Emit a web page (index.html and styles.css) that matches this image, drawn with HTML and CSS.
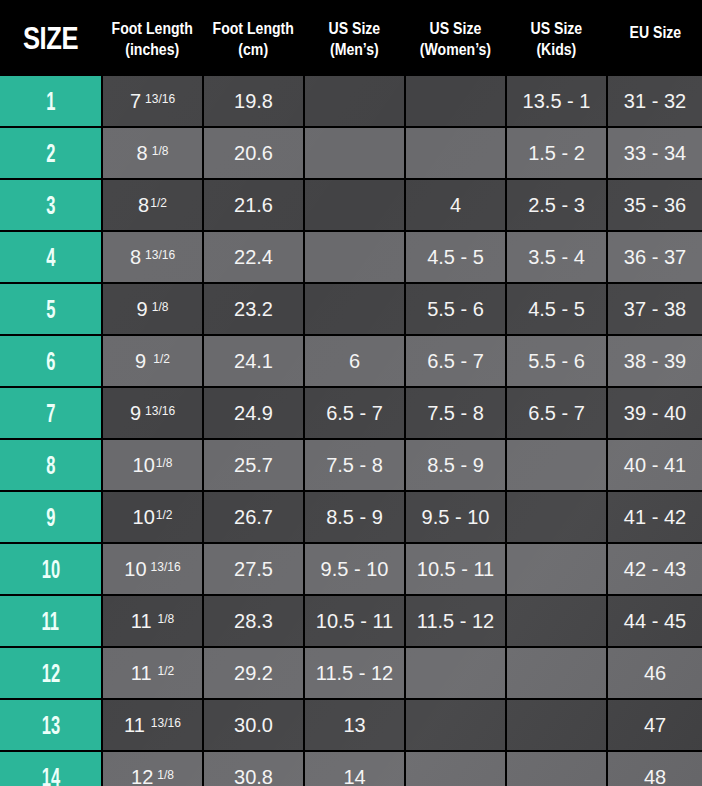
FILE: index.html
```html
<!DOCTYPE html>
<html lang="en">
<head>
<meta charset="utf-8">
<title>Size Chart</title>
<link rel="stylesheet" href="styles.css">
</head>
<body>
<div class="chart">
  <div class="row head">
    <div class="hc size"><span class="cond-xl">SIZE</span></div>
    <div class="hc"><span class="cond">Foot Length<br>(inches)</span></div>
    <div class="hc"><span class="cond">Foot Length<br>(cm)</span></div>
    <div class="hc"><span class="cond">US Size<br>(Men’s)</span></div>
    <div class="hc"><span class="cond">US Size<br>(Women’s)</span></div>
    <div class="hc"><span class="cond">US Size<br>(Kids)</span></div>
    <div class="hc single"><span class="cond">EU Size</span></div>
  </div>

  <div class="row dark">
    <div class="num"><span class="cond-num">1</span></div>
    <div class="c"><span>7</span><span class="fr">13/16</span></div><div class="c">19.8</div><div class="c"></div><div class="c"></div><div class="c">13.5 - 1</div><div class="c">31 - 32</div>
  </div>
  <div class="row light">
    <div class="num"><span class="cond-num">2</span></div>
    <div class="c"><span>8</span><span class="fr">1/8</span></div><div class="c">20.6</div><div class="c"></div><div class="c"></div><div class="c">1.5 - 2</div><div class="c">33 - 34</div>
  </div>
  <div class="row dark">
    <div class="num"><span class="cond-num">3</span></div>
    <div class="c"><span>8</span><span class="fr tight">1/2</span></div><div class="c">21.6</div><div class="c"></div><div class="c">4</div><div class="c">2.5 - 3</div><div class="c">35 - 36</div>
  </div>
  <div class="row light">
    <div class="num"><span class="cond-num">4</span></div>
    <div class="c"><span>8</span><span class="fr">13/16</span></div><div class="c">22.4</div><div class="c"></div><div class="c">4.5 - 5</div><div class="c">3.5 - 4</div><div class="c">36 - 37</div>
  </div>
  <div class="row dark">
    <div class="num"><span class="cond-num">5</span></div>
    <div class="c"><span>9</span><span class="fr">1/8</span></div><div class="c">23.2</div><div class="c"></div><div class="c">5.5 - 6</div><div class="c">4.5 - 5</div><div class="c">37 - 38</div>
  </div>
  <div class="row light">
    <div class="num"><span class="cond-num">6</span></div>
    <div class="c"><span>9</span><span class="fr wide">1/2</span></div><div class="c">24.1</div><div class="c">6</div><div class="c">6.5 - 7</div><div class="c">5.5 - 6</div><div class="c">38 - 39</div>
  </div>
  <div class="row dark">
    <div class="num"><span class="cond-num">7</span></div>
    <div class="c"><span>9</span><span class="fr">13/16</span></div><div class="c">24.9</div><div class="c">6.5 - 7</div><div class="c">7.5 - 8</div><div class="c">6.5 - 7</div><div class="c">39 - 40</div>
  </div>
  <div class="row light">
    <div class="num"><span class="cond-num">8</span></div>
    <div class="c"><span>10</span><span class="fr tight">1/8</span></div><div class="c">25.7</div><div class="c">7.5 - 8</div><div class="c">8.5 - 9</div><div class="c"></div><div class="c">40 - 41</div>
  </div>
  <div class="row dark">
    <div class="num"><span class="cond-num">9</span></div>
    <div class="c"><span>10</span><span class="fr tight">1/2</span></div><div class="c">26.7</div><div class="c">8.5 - 9</div><div class="c">9.5 - 10</div><div class="c"></div><div class="c">41 - 42</div>
  </div>
  <div class="row light">
    <div class="num"><span class="cond-num">10</span></div>
    <div class="c"><span>10</span><span class="fr">13/16</span></div><div class="c">27.5</div><div class="c">9.5 - 10</div><div class="c">10.5 - 11</div><div class="c"></div><div class="c">42 - 43</div>
  </div>
  <div class="row dark">
    <div class="num"><span class="cond-num">11</span></div>
    <div class="c"><span>11</span><span class="fr mid">1/8</span></div><div class="c">28.3</div><div class="c">10.5 - 11</div><div class="c">11.5 - 12</div><div class="c"></div><div class="c">44 - 45</div>
  </div>
  <div class="row light">
    <div class="num"><span class="cond-num">12</span></div>
    <div class="c"><span>11</span><span class="fr mid">1/2</span></div><div class="c">29.2</div><div class="c">11.5 - 12</div><div class="c"></div><div class="c"></div><div class="c">46</div>
  </div>
  <div class="row dark">
    <div class="num"><span class="cond-num">13</span></div>
    <div class="c"><span>11</span><span class="fr mid">13/16</span></div><div class="c">30.0</div><div class="c">13</div><div class="c"></div><div class="c"></div><div class="c">47</div>
  </div>
  <div class="row light">
    <div class="num"><span class="cond-num">14</span></div>
    <div class="c"><span>12</span><span class="fr">1/8</span></div><div class="c">30.8</div><div class="c">14</div><div class="c"></div><div class="c"></div><div class="c">48</div>
  </div>
</div>
</body>
</html>
```

FILE: styles.css
```css
html, body {
  margin: 0;
  padding: 0;
  background: #000;
}

body {
  width: 702px;
  height: 786px;
  overflow: hidden;
  font-family: "Liberation Sans", Arial, sans-serif;
  color: #f4f4f4;
}

.chart {
  display: grid;
  grid-template-columns: 101px 99px 99px 99px 99px 99px 94px;
  grid-template-rows: 74px;
  grid-auto-rows: 50px;
  gap: 2px;
  background: #000;
}

.row {
  display: contents;
}

/* header */
.hc {
  background: #000;
  display: flex;
  align-items: center;
  justify-content: center;
  text-align: center;
  color: #fff;
  padding-top: 4px;
}

.hc.single {
  padding-top: 0;
  padding-bottom: 10px;
}

.hc.size {
  padding-top: 2px;
}

.cond {
  display: inline-block;
  font-weight: bold;
  font-size: 16px;
  line-height: 21px;
  transform: scaleX(0.88);
  white-space: nowrap;
}

.cond-xl {
  display: inline-block;
  font-weight: bold;
  font-size: 32px;
  line-height: 32px;
  transform: scaleX(0.8);
  letter-spacing: -0.5px;
}

/* size column */
.num {
  background: #2cb699;
  display: flex;
  align-items: center;
  justify-content: center;
  color: #ecfff9;
}

.cond-num {
  display: inline-block;
  font-weight: bold;
  font-size: 25px;
  line-height: 25px;
  transform: scaleX(0.66);
}

/* value cells */
.c {
  display: flex;
  align-items: center;
  justify-content: center;
  font-size: 20px;
  line-height: 22px;
  white-space: nowrap;
}

.dark .c {
  background:
    linear-gradient(125deg, rgba(255,255,255,0.03) 0%, rgba(255,255,255,0) 40%, rgba(255,255,255,0.035) 75%, rgba(0,0,0,0.05) 100%) fixed,
    #434345;
}

.light .c {
  background:
    linear-gradient(125deg, rgba(255,255,255,0.02) 0%, rgba(255,255,255,0) 40%, rgba(255,255,255,0.03) 75%, rgba(0,0,0,0.04) 100%) fixed,
    #6a6a6d;
}

.fr {
  font-size: 12px;
  line-height: 12px;
  align-self: flex-start;
  margin-top: 17px;
  margin-left: 4px;
}

.fr.tight {
  margin-left: 1px;
}

.fr.mid {
  margin-left: 6px;
}

.fr.wide {
  margin-left: 7px;
}
```
